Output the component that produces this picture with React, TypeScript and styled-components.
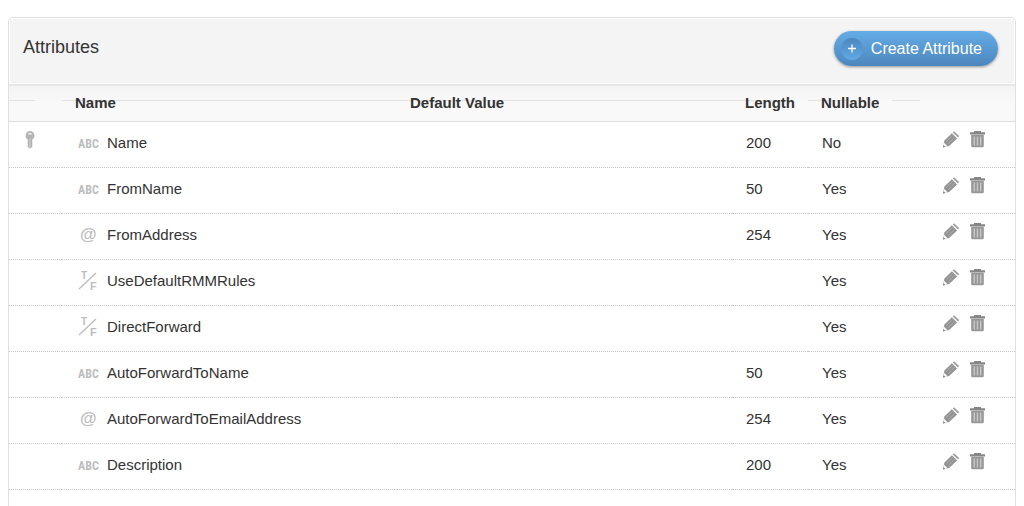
import React from "react";
import styled, { createGlobalStyle } from "styled-components";

const GlobalStyle = createGlobalStyle`
  * { box-sizing: border-box; }
  body {
    margin: 0;
    background: #fff;
    color: #333;
    font: 15px/20px "Liberation Sans", Arial, sans-serif;
  }
`;

const Page = styled.main`
  padding: 17px 8px 0 8px;
`;

const Panel = styled.section`
  border: 1px solid #e0e0e0;
  border-radius: 5px;
  min-height: 100vh;
`;

const PanelHeader = styled.header`
  display: flex;
  align-items: flex-start;
  justify-content: space-between;
  height: 66px;
  padding: 12px 16px 0 13px;
  background: #f4f4f4;
  border: 1px solid #fff;
  border-radius: 4px 4px 0 0;
`;

const Title = styled.h2`
  margin: 4px 0 0;
  font-size: 18px;
  line-height: 24px;
  font-weight: 400;
`;

const CreateButton = styled.button`
  display: flex;
  align-items: center;
  gap: 8px;
  height: 35px;
  padding: 0 16px 0 7px;
  border: 0;
  border-radius: 18px;
  color: #fff;
  font: 16px/20px "Liberation Sans", Arial, sans-serif;
  background: linear-gradient(#64ace6, #4d86be);
  box-shadow: 0 1px 3px rgba(0, 0, 0, 0.4);
`;

const Plus = styled.svg`
  display: block;
  width: 22px;
  height: 22px;
  border-radius: 50%;
  background: linear-gradient(#4b86bf, #62a9e4);
`;

const Table = styled.table`
  width: 100%;
  table-layout: fixed;
  border-collapse: separate;
  border-spacing: 0;
`;

const Col = styled.col<{ $w?: number }>`
  width: ${(p) => (p.$w ? `${p.$w}px` : "auto")};
`;

const HeadCell = styled.th<{ $rule: string }>`
  height: 38px;
  padding: 0 0 2px 13px;
  text-align: left;
  font-weight: 700;
  border-top: 2px solid #e8e8e8;
  border-bottom: 1px solid #dfdfdf;
  background:
    linear-gradient(#e2e2e2, #e2e2e2) 0 14px / ${(p) => p.$rule} 1px no-repeat,
    linear-gradient(#f4f4f4, #f9f9f9 50%, #f9f9f9);
`;

const Cell = styled.td`
  height: 46px;
  padding: 0 0 4px 14px;
  border-bottom: 1px dotted #c8c8c8;
`;

const NameBox = styled.div`
  display: flex;
  align-items: center;
  gap: 8px;
  padding-left: 2px;
`;

const KeyBox = styled.div`
  padding-bottom: 5px;
`;

const Actions = styled.div`
  display: flex;
  justify-content: flex-end;
  gap: 10px;
  padding: 0 30px 7px 0;
`;

const IconButton = styled.button`
  display: flex;
  padding: 0;
  border: 0;
  background: none;
`;

const TypeIcon = styled.svg`
  flex: none;
  display: block;
  font-family: "Liberation Sans", Arial, sans-serif;
  font-weight: 700;
  fill: #bdbdbd;
`;

const Letters = styled.text`
  font-family: "Roboto Condensed", "Open Sans Condensed", "Liberation Sans", sans-serif;
  font-size: 12px;
`;

const KeyIcon = () => (
  <svg width="14" height="18" viewBox="0 0 14 18" display="block" role="img" aria-label="Key">
    <path fillRule="evenodd" fill="#b5b5b5" d="M7 0a4.7 4.7 0 0 1 2.3 8.6V16L7 17.6 4.7 16V8.6A4.7 4.7 0 0 1 7 0zM5.4 2.2v1.4h3.2V2.2z" />
    <path d="M7 8v8" stroke="#cecece" />
  </svg>
);

const PencilIcon = () => (
  <svg width="17" height="17" viewBox="0 0 17 17" display="block">
    <path fill="#949494" d="M8.9 2.2l5.2 5.2-8 7.6L0 16.4 1.4 9.4z" />
    <path fill="#a2a2a2" d="M9.7 1.4L11 .2l5.2 4.9-1.3 1.5z" />
    <path d="M3.2 10.6l7-6.6M5.2 12.6l7-6.6" stroke="#b0b0b0" strokeWidth=".8" />
    <path fill="#fff" d="M1 11.8l3.6 3.4-3.1.7L.4 14.6z" />
    <path fill="#888" d="M0 16.5l.5-2.4 1.9 1.9z" />
  </svg>
);

const TrashIcon = () => (
  <svg width="15" height="17" viewBox="0 0 15 17" display="block">
    <path fill="#868686" d="M4 0h7v1.2h4v2.3H0V1.2h4z" />
    <path fill="#979797" d="M1.2 3.8h12.6V15q0 1.3-1.3 1.3h-10q-1.3 0-1.3-1.3z" />
    <path d="M4.3 5.5v9M7.5 5.5v9M10.7 5.5v9" stroke="#c8c8c8" strokeWidth="1.4" />
  </svg>
);

type Kind = "text" | "email" | "boolean";

const KindIcon = ({ kind }: { kind: Kind }) => (
  <TypeIcon width="21" height="22" viewBox="0 0 21 22" aria-hidden="true">
    {kind === "text" && <Letters x="0" y="16">ABC</Letters>}
    {kind === "email" && <text x="2" y="16" fontSize="17">@</text>}
    {kind === "boolean" && (
      <>
        <text x="3" y="9" fontSize="10">T</text>
        <text x="12" y="20" fontSize="11">F</text>
        <path d="M1 19L18 3" stroke="#bdbdbd" strokeWidth="1.3" />
      </>
    )}
  </TypeIcon>
);

const rows: { name: string; kind: Kind; length: string; nullable: string; isKey?: boolean }[] = [
  { name: "Name", kind: "text", length: "200", nullable: "No", isKey: true },
  { name: "FromName", kind: "text", length: "50", nullable: "Yes" },
  { name: "FromAddress", kind: "email", length: "254", nullable: "Yes" },
  { name: "UseDefaultRMMRules", kind: "boolean", length: "", nullable: "Yes" },
  { name: "DirectForward", kind: "boolean", length: "", nullable: "Yes" },
  { name: "AutoForwardToName", kind: "text", length: "50", nullable: "Yes" },
  { name: "AutoForwardToEmailAddress", kind: "email", length: "254", nullable: "Yes" },
  { name: "Description", kind: "text", length: "200", nullable: "Yes" },
];

export default function App() {
  return (
    <Page>
      <GlobalStyle />
      <Panel>
        <PanelHeader>
          <Title>Attributes</Title>
          <CreateButton type="button">
            <Plus viewBox="0 0 22 22" aria-hidden="true">
              <path d="M7 10.5h8M11 6.5v8" stroke="#fff" strokeWidth="1.3" />
            </Plus>
            Create Attribute
          </CreateButton>
        </PanelHeader>
        <Table>
          <colgroup>
            <Col $w={53} />
            <Col />
            <Col />
            <Col $w={76} />
            <Col $w={84} />
            <Col $w={123} />
          </colgroup>
          <thead>
            <tr>
              <HeadCell $rule="26px" />
              <HeadCell $rule="100%">Name</HeadCell>
              <HeadCell $rule="100%">Default Value</HeadCell>
              <HeadCell $rule="61px">Length</HeadCell>
              <HeadCell $rule="56px">Nullable</HeadCell>
              <HeadCell $rule="28px" />
            </tr>
          </thead>
          <tbody>
            {rows.map((row) => (
              <tr key={row.name}>
                <Cell>{row.isKey && <KeyBox><KeyIcon /></KeyBox>}</Cell>
                <Cell>
                  <NameBox>
                    <KindIcon kind={row.kind} />
                    {row.name}
                  </NameBox>
                </Cell>
                <Cell />
                <Cell>{row.length}</Cell>
                <Cell>{row.nullable}</Cell>
                <Cell>
                  <Actions>
                    <IconButton type="button" aria-label={`Edit ${row.name}`}>
                      <PencilIcon />
                    </IconButton>
                    <IconButton type="button" aria-label={`Delete ${row.name}`}>
                      <TrashIcon />
                    </IconButton>
                  </Actions>
                </Cell>
              </tr>
            ))}
          </tbody>
        </Table>
      </Panel>
    </Page>
  );
}
